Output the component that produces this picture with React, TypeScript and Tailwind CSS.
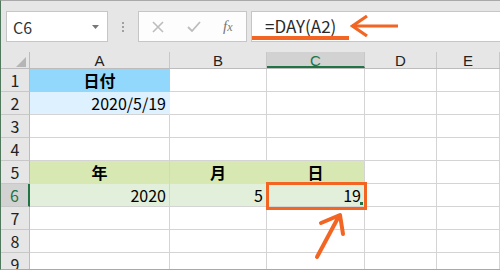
import React from "react";

const cols = [
  { key: "A", w: "w-[140px]" },
  { key: "B", w: "w-[97px]" },
  { key: "C", w: "w-[98px]" },
  { key: "D", w: "w-[72px]" },
  { key: "E", w: "w-[63px]" },
];

type Cell = { text?: string; align?: "c" | "r"; bold?: boolean; bg?: string; br?: string; bb?: string };

const data: Record<number, Record<string, Cell>> = {
  1: { A: { text: "日付", align: "c", bold: true, bg: "bg-[#92d8fc]", br: "border-r-[#92d8fc]", bb: "border-b-[#92d8fc]" } },
  2: { A: { text: "2020/5/19", align: "r", bg: "bg-[#ddf1ff]", br: "border-r-[#ddf1ff]" } },
  5: {
    A: { text: "年", align: "c", bold: true, bg: "bg-[#d8e8b2]", bb: "border-b-[#d8e8b2]" },
    B: { text: "月", align: "c", bold: true, bg: "bg-[#d8e8b2]", br: "border-r-[#d8e8b2]", bb: "border-b-[#d8e8b2]" },
    C: { text: "日", align: "c", bold: true, bg: "bg-[#d8e8b2]", bb: "border-b-[#d8e8b2]" },
  },
  6: {
    A: { text: "2020", align: "r", bg: "bg-[#e2efda]" },
    B: { text: "5", align: "r", bg: "bg-[#e2efda]", br: "border-r-[#e2efda]" },
    C: { text: "19", align: "r", bg: "bg-[#e2efda]" },
  },
};

const rows = [1, 2, 3, 4, 5, 6, 7, 8, 9];
const font = { fontFamily: '"Noto Sans CJK JP", "Noto Sans", sans-serif' };
const hdrFont = { fontFamily: '"Liberation Sans", Arial, sans-serif' };

export default function App() {
  return (
    <div
      className="relative w-[500px] h-[270px] overflow-hidden bg-[#e6e6e6] border-t border-b border-l border-t-[#a9a9a9] border-b-[#a9a9a9] border-l-[#50785d] flex flex-col"
      style={font}
    >
      {/* toolbar */}
      <div className="h-[51px] shrink-0 flex items-start pt-[10px] pl-[5px]">
        <div className="w-[102px] h-[31px] bg-white border border-[#c6c6c6] flex items-center justify-between pl-[6px] pr-[8px]">
          <span className="text-[16px] text-[#333] leading-none">C6</span>
          <svg width="7" height="4" viewBox="0 0 7 4">
            <path d="M0 0 L7 0 L3.5 4 Z" fill="#777" />
          </svg>
        </div>
        <div className="w-[30px] h-[31px] flex flex-col items-center justify-center gap-[2px]">
          <div className="w-[2px] h-[2px] bg-[#a0a0a0]" />
          <div className="w-[2px] h-[2px] bg-[#a0a0a0]" />
          <div className="w-[2px] h-[2px] bg-[#a0a0a0]" />
        </div>
        <div className="w-[109px] h-[31px] bg-[#fdfdfd] border border-[#c6c6c6] flex items-center">
          <svg width="12" height="12" viewBox="0 0 12 12" className="ml-[13px]">
            <path d="M1 1 L11 11 M11 1 L1 11" stroke="#bdbdbd" strokeWidth="1.6" />
          </svg>
          <svg width="14" height="11" viewBox="0 0 14 11" className="ml-[23px]">
            <path d="M1 6 L5 10 L13 1" stroke="#bdbdbd" strokeWidth="1.8" fill="none" />
          </svg>
          <span
            className="ml-[22px] text-[15px] italic text-[#777] leading-none"
            style={{ fontFamily: '"Liberation Serif", serif' }}
          >
            f<span className="text-[12px]">x</span>
          </span>
        </div>
        <div className="ml-[4px] flex-1 h-[31px] bg-white border-t border-l border-b border-[#c6c6c6] relative">
          <span className="absolute left-[13px] top-[3px] text-[17px] text-[#2a2a2a] leading-[22px]">
            =DAY(A2)
          </span>
          <div className="absolute left-0 top-[24px] w-[97px] h-[4px] bg-[#f26522]" />
          <svg className="absolute left-[98px] top-[1px]" width="52" height="26" viewBox="0 0 52 26">
            <path d="M2 13 L48 13" stroke="#f26522" strokeWidth="3.2" />
            <path d="M17 3 L2.5 13 L17 23" stroke="#f26522" strokeWidth="3.2" fill="none" />
          </svg>
        </div>
      </div>

      {/* column header */}
      <div className="flex h-[17px] shrink-0 border-b border-[#bcbcbc]">
        <div className="w-[29px] h-full border-r border-[#bcbcbc] relative">
          <svg className="absolute right-[3px] bottom-[1px]" width="10" height="10" viewBox="0 0 10 10">
            <path d="M10 0 L10 10 L0 10 Z" fill="#b5b5b5" />
          </svg>
        </div>
        {cols.map((c) => (
          <div
            key={c.key}
            className={`${c.w} h-full flex items-center justify-center text-[15px] leading-[15px] border-r border-[#c8c8c8] ${
              c.key === "C" ? "bg-[#d2d2d2] text-[#217346] border-b-2 border-b-[#217346]" : "text-[#222]"
            }`}
            style={hdrFont}
          >
            <span className={c.key === "C" ? "mt-[2px]" : ""}>{c.key}</span>
          </div>
        ))}
      </div>

      {/* rows */}
      {rows.map((r) => (
        <div key={r} className="flex h-[23px] shrink-0">
          <div
            className={`w-[29px] h-full flex items-center justify-center text-[16px] leading-none border-b border-[#c8c8c8] ${
              r === 6
                ? "bg-[#d2d2d2] text-[#217346] border-r-2 border-r-[#217346]"
                : "border-r border-r-[#bcbcbc] text-[#222]"
            }`}
          >
            {r}
          </div>
          {cols.map((c) => {
            const cell = data[r]?.[c.key];
            const isSel = r === 6 && c.key === "C";
            return (
              <div
                key={c.key}
                className={`${c.w} h-full relative flex items-center border-r border-b border-[#d4d4d4] ${cell?.bg ?? "bg-white"} ${
                  cell?.br ?? ""
                } ${cell?.bb ?? ""} ${
                  cell?.align === "c" ? "justify-center" : "justify-end pr-[3px]"
                }`}
              >
                {cell?.text && (
                  <span className={`text-[16px] leading-none text-black ${cell.bold ? "font-bold" : ""}`}>
                    {cell.text}
                  </span>
                )}
                {isSel && (
                  <>
                    <div className="absolute z-10 left-[-1px] top-[-2px] w-[101px] h-[28px] border-[3px] border-[#f26522]" />
                    <div className="absolute z-20 right-[1px] bottom-[1px] w-[3px] h-[3px] bg-[#217346]" />
                  </>
                )}
              </div>
            );
          })}
        </div>
      ))}

      {/* bottom arrow */}
      <svg className="absolute z-10 left-[305px] top-[208px]" width="50" height="55" viewBox="0 0 50 55">
        <path d="M11 48 L33 7" stroke="#f26522" strokeWidth="4" strokeLinecap="round" />
        <path d="M15 14 L34 6 L37 25" stroke="#f26522" strokeWidth="4" fill="none" strokeLinecap="round" strokeLinejoin="round" />
      </svg>
    </div>
  );
}
